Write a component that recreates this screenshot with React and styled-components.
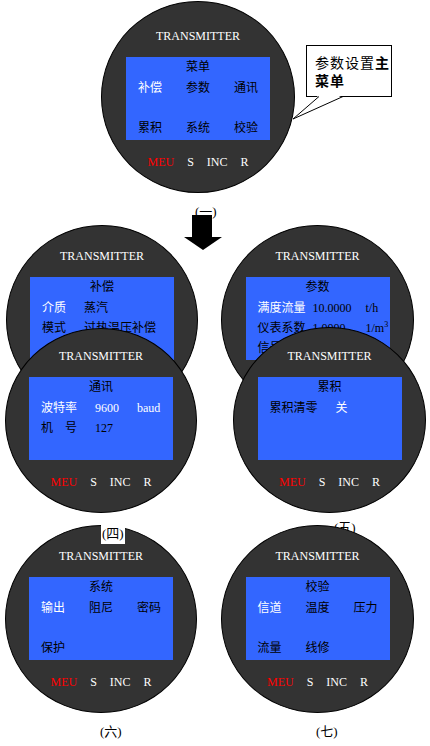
import styled, { createGlobalStyle } from 'styled-components';

const GlobalStyle = createGlobalStyle`
  html, body {
    margin: 0;
    padding: 0;
    background: #fff;
  }
  body {
    font-family: 'Liberation Serif', 'Noto Sans CJK SC', serif;
  }
`;

const BLUE = '#3366ff';
const BODY = '#333333';

const Dial = ({ x, y, w, h, pt, z, children }) => (
  <DialBody $x={x} $y={y} $w={w} $h={h} $pt={pt} $z={z}>
    <DialTitle>TRANSMITTER</DialTitle>
    <Screen>{children}</Screen>
    <Keys>
      <Key $red>MEU</Key>
      <Key>S</Key>
      <Key>INC</Key>
      <Key>R</Key>
    </Keys>
  </DialBody>
);

const MenuScreen = ({ title, items }) => (
  <>
    <ScreenTitle>{title}</ScreenTitle>
    <MenuGrid>
      {items.map((t, i) => (
        <Item key={i} $on={i === 0}>
          {t}
        </Item>
      ))}
    </MenuGrid>
  </>
);

const ParamScreen = ({ title, cols, rows }) => (
  <>
    <ScreenTitle>{title}</ScreenTitle>
    <ParamList>
      {rows.map((row, i) => (
        <ParamRow key={i} $cols={cols}>
          {row.map((cell, j) => (
            <Item key={j} $on={cell.on}>
              {cell.t}
            </Item>
          ))}
        </ParamRow>
      ))}
    </ParamList>
  </>
);

const App = () => {
  return (
    <Canvas>
      <GlobalStyle />

      <Dial x={101} y={1} w={194} h={192} pt={26} z={1}>
        <MenuScreen title='菜单' items={['补偿', '参数', '通讯', '累积', '系统', '校验']} />
      </Dial>

      <Callout>
        <div>
          参数设置<b>主</b>
        </div>
        <div>
          <b>菜单</b>
        </div>
      </Callout>
      <CalloutTail width='56' height='26' viewBox='0 0 56 26'>
        <polygon points='29,0 53,0 3,24' fill='#fff' />
        <polyline points='29,1.5 3,24 53,1.5' fill='none' stroke='#000' strokeWidth='1' />
      </CalloutTail>

      <Caption $x={195} $y={204} $z={1}>
        (一)
      </Caption>
      <Arrow width='39' height='38' viewBox='0 0 39 38'>
        <rect x='8' y='2' width='20' height='23' fill='#000' />
        <polygon points='0,24 38,24 19,37' fill='#000' />
      </Arrow>

      <Dial x={6} y={225} w={192} h={190} pt={22} z={1}>
        <ParamScreen
          title='补偿'
          cols='42px auto'
          rows={[
            [{ t: '介质', on: true }, { t: '蒸汽' }],
            [{ t: '模式' }, { t: '过热温压补偿' }],
          ]}
        />
      </Dial>

      <Dial x={221} y={225} w={193} h={190} pt={22} z={1}>
        <ParamScreen
          title='参数'
          cols='55px 53px auto'
          rows={[
            [{ t: '满度流量', on: true }, { t: '10.0000' }, { t: 't/h' }],
            [
              { t: '仪表系数' },
              { t: '1.0000' },
              {
                t: (
                  <>
                    1/m<Sup>3</Sup>
                  </>
                ),
              },
            ],
            [{ t: '信号切除' }, { t: '0.0' }, { t: '%' }],
          ]}
        />
      </Dial>

      <Dial x={5} y={328} w={192} h={185} pt={19} z={2}>
        <ParamScreen
          title='通讯'
          cols='54px 42px auto'
          rows={[
            [
              { t: '波特率', on: true },
              { t: '9600', on: true },
              { t: 'baud', on: true },
            ],
            [{ t: '机\u3000号' }, { t: '127' }, { t: '' }],
          ]}
        />
      </Dial>

      <Dial x={233} y={327} w={193} h={186} pt={20} z={2}>
        <ParamScreen
          title='累积'
          cols='66px auto'
          rows={[[{ t: '累积清零' }, { t: '关', on: true }]]}
        />
      </Dial>

      <Caption $x={334} $y={520} $z={1}>
        (五)
      </Caption>

      <Dial x={5} y={525} w={192} h={188} pt={22} z={1}>
        <MenuScreen title='系统' items={['输出', '阻尼', '密码', '保护']} />
      </Dial>

      <Dial x={221} y={525} w={193} h={188} pt={22} z={2}>
        <MenuScreen title='校验' items={['信道', '温度', '压力', '流量', '线修']} />
      </Dial>

      <Caption $x={101} $y={524} $z={3} $boxed>
        (四)
      </Caption>
      <Caption $x={100} $y={724} $z={1}>
        (六)
      </Caption>
      <Caption $x={316} $y={724} $z={1}>
        (七)
      </Caption>
    </Canvas>
  );
};

const Canvas = styled.div`
  position: relative;
  width: 430px;
  height: 746px;
  overflow: hidden;
  background: #fff;
`;

// dials sit on a free canvas and overlap each other, so they're placed by coordinates
const DialBody = styled.div`
  position: absolute;
  left: ${(p) => p.$x}px;
  top: ${(p) => p.$y}px;
  width: ${(p) => p.$w}px;
  height: ${(p) => p.$h}px;
  z-index: ${(p) => p.$z};
  box-sizing: border-box;
  padding-top: ${(p) => p.$pt}px;
  border: 1px solid #000;
  border-radius: 50%;
  background: ${BODY};
  display: flex;
  flex-direction: column;
  align-items: center;
`;

const DialTitle = styled.div`
  height: 16px;
  line-height: 16px;
  font-family: 'Liberation Serif', serif;
  font-size: 12px;
  color: #fff;
`;

const Screen = styled.div`
  margin-top: 13px;
  width: 144px;
  height: 83px;
  flex-shrink: 0;
  box-sizing: border-box;
  padding-top: 2px;
  background: ${BLUE};
  display: flex;
  flex-direction: column;
`;

const ScreenTitle = styled.div`
  height: 16px;
  line-height: 16px;
  text-align: center;
  font-size: 12px;
  color: #000;
`;

const MenuGrid = styled.div`
  margin-top: 5px;
  padding-left: 12px;
  display: grid;
  grid-template-columns: 48px 48px 48px;
  grid-auto-rows: 16px;
  row-gap: 24px;
`;

const ParamList = styled.div`
  margin-top: 3px;
  padding-left: 12px;
  display: flex;
  flex-direction: column;
`;

const ParamRow = styled.div`
  display: grid;
  grid-template-columns: ${(p) => p.$cols};
  height: 20px;
  align-items: center;
`;

const Item = styled.span`
  font-size: 12px;
  line-height: 16px;
  white-space: nowrap;
  color: ${(p) => (p.$on ? '#fff' : '#000')};
`;

const Sup = styled.sup`
  font-size: 8px;
  line-height: 0;
  vertical-align: 5px;
`;

const Keys = styled.div`
  margin-top: 14px;
  display: flex;
  gap: 13px;
  height: 16px;
  line-height: 16px;
  font-family: 'Liberation Serif', serif;
  font-size: 12px;
`;

const Key = styled.span`
  color: ${(p) => (p.$red ? '#ff0000' : '#fff')};
`;

const Callout = styled.div`
  position: absolute;
  left: 306px;
  top: 45px;
  z-index: 2;
  width: 86px;
  height: 52px;
  box-sizing: border-box;
  padding: 7px 0 0 8px;
  border: 1px solid #000;
  background: #fff;
  font-family: 'Noto Sans CJK SC', sans-serif;
  font-size: 14px;
  line-height: 18px;
  letter-spacing: 1px;
  color: #000;
  white-space: nowrap;
`;

const CalloutTail = styled.svg`
  position: absolute;
  left: 290px;
  top: 95px;
  z-index: 3;
`;

const Arrow = styled.svg`
  position: absolute;
  left: 184px;
  top: 213px;
  z-index: 2;
`;

const Caption = styled.div`
  position: absolute;
  left: ${(p) => p.$x}px;
  top: ${(p) => p.$y}px;
  z-index: ${(p) => p.$z};
  padding: ${(p) => (p.$boxed ? '2px 1px' : '0')};
  background: ${(p) => (p.$boxed ? '#fff' : 'transparent')};
  font-size: 13px;
  line-height: 16px;
  color: #000;
  white-space: nowrap;
`;

export default App;
